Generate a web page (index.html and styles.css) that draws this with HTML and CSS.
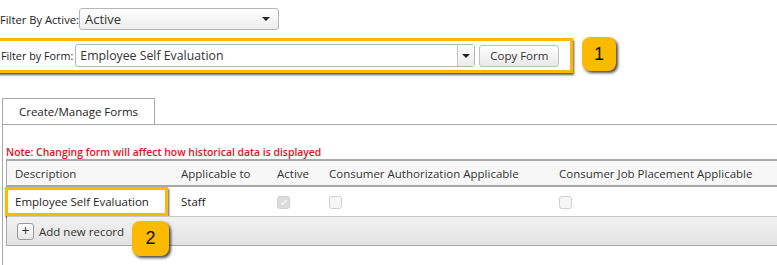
FILE: index.html
```html
<!DOCTYPE html>
<html lang="en">
<head>
    <meta charset="UTF-8">
    <title>Forms</title>
    <link rel="stylesheet" href="styles.css">
</head>
<body>
    <div class="filter-row">
        <label class="lbl">Filter By Active:</label>
        <div class="dropdown active-drop">
            <span class="drop-text">Active</span>
            <span class="caret"></span>
        </div>
    </div>

    <div class="form-row">
        <div class="highlight form-box">
            <label class="lbl">Filter by Form:</label>
            <div class="dropdown form-drop">
                <span class="drop-text">Employee Self Evaluation</span>
                <span class="drop-btn"><span class="caret"></span></span>
            </div>
            <button class="btn">Copy Form</button>
        </div>
        <div class="badge">1</div>
    </div>

    <div class="tabs">
        <div class="tab">Create/Manage Forms</div>
    </div>

    <div class="panel">
        <div class="note">Note: Changing form will affect how historical data is displayed</div>

        <div class="grid">
            <div class="grid-head">
                <div class="col c-desc">Description</div>
                <div class="col c-app">Applicable to</div>
                <div class="col c-act">Active</div>
                <div class="col c-auth">Consumer Authorization Applicable</div>
                <div class="col c-job">Consumer Job Placement Applicable</div>
            </div>
            <div class="grid-row">
                <div class="col c-desc"><span class="highlight cell-box">Employee Self Evaluation</span></div>
                <div class="col c-app">Staff</div>
                <div class="col c-act"><span class="chk checked">&#10004;</span></div>
                <div class="col c-auth"><span class="chk"></span></div>
                <div class="col c-job"><span class="chk"></span></div>
            </div>
            <div class="grid-foot">
                <span class="plus">+</span> Add new record
                <div class="badge badge-two">2</div>
            </div>
        </div>
    </div>
</body>
</html>
```

FILE: styles.css
```css
/* annotation yellow */
:root {
    --note-yellow: #fbb900;
    --line: #a8a8a8;
}

body {
    margin: 0;
    font-family: "Open Sans", Arial, sans-serif;
    font-size: 10.8px;
    color: #222;
    background: #fff;
}

.lbl {
    white-space: nowrap;
}

/* top filters */
.filter-row {
    display: flex;
    align-items: center;
    height: 22px;
    margin-top: 8px;
}

.filter-row .lbl {
    font-size: 11.2px;
}

.dropdown {
    display: flex;
    align-items: center;
    height: 20px;
    border: 1px solid #b5b5b5;
    border-radius: 3px;
    box-sizing: border-box;
    background: linear-gradient(#ffffff, #ededed);
}

.active-drop {
    width: 200px;
    height: 22px;
    margin-left: 0;
    padding: 0 8px 0 5px;
}

.drop-text {
    flex: 1;
    font-size: 13px;
    color: #333;
}

.caret {
    width: 0;
    height: 0;
    border-left: 4px solid transparent;
    border-right: 4px solid transparent;
    border-top: 4px solid #222;
}

.form-row {
    display: flex;
    align-items: center;
    margin-top: 8px;
}

.highlight {
    border: 3px solid var(--note-yellow);
    box-shadow: 1px 2px 2px rgba(0, 0, 0, 0.65);
}

/* left edge of the box runs off the page */
.form-box {
    display: flex;
    align-items: center;
    width: 576px;
    height: 35px;
    margin-left: -3px;
    box-sizing: border-box;
    padding-left: 1px;
}

.form-drop {
    width: 400px;
    height: 23px;
    margin-left: 2px;
    padding-left: 4px;
    background: #fff;
}

.form-drop .drop-text {
    font-size: 12.3px;
}

.drop-btn {
    display: flex;
    align-items: center;
    justify-content: center;
    width: 16px;
    height: 100%;
    border-left: 1px solid #c5c5c5;
    background: linear-gradient(#fdfdfd, #ececec);
}

.btn {
    margin-left: 4px;
    width: 80px;
    height: 22px;
    border: 1px solid #c0c0c0;
    border-radius: 3px;
    background: linear-gradient(#ffffff, #e8e8e8);
    font-family: inherit;
    font-size: 11.5px;
    color: #333;
    padding: 0;
}

.badge {
    display: flex;
    align-items: center;
    justify-content: center;
    width: 34px;
    height: 34px;
    margin-left: 9px;
    margin-top: -3px;
    border-radius: 8px;
    background: var(--note-yellow);
    box-shadow: 2px 2px 3px rgba(0, 0, 0, 0.7);
    font-family: Arial, sans-serif;
    font-size: 18px;
    color: #111;
}

/* tab strip */
.tabs {
    display: flex;
    margin-top: 25px;
    padding-left: 2px;
}

.tab {
    width: 153px;
    height: 26px;
    line-height: 25px;
    text-align: center;
    border: 1px solid var(--line);
    border-bottom: none;
    box-sizing: border-box;
    font-size: 11.5px;
    color: #222;
}

.panel {
    margin-left: 2px;
    border-top: 1px solid var(--line);
    border-left: 1px solid var(--line);
    padding: 21px 0 20px 3px;
}

.note {
    color: #e0101a;
    font-weight: 600;
    font-size: 10.4px;
    line-height: 13px;
}

.grid {
    position: relative;
    border-top: 2px solid var(--line);
    border-left: 1px solid var(--line);
}

.grid-head, .grid-row {
    display: flex;
    align-items: center;
}

.grid-head {
    height: 24px;
    background: #f7f7f7;
    border-bottom: 2px solid var(--line);
    font-size: 11.5px;
    color: #333;
}

.grid-row {
    height: 29px;
    font-size: 11.5px;
}

.col {
    box-sizing: border-box;
    white-space: nowrap;
}

.c-desc { width: 174px; padding-left: 8px; }
.c-app { width: 96px; }
.c-act { width: 52px; }
.c-auth { width: 230px; }
.c-job { flex: 1; }

.grid-row .c-desc {
    padding-left: 0;
}

.cell-box {
    display: inline-block;
    margin-left: -2px;
    width: 163px;
    height: 29px;
    line-height: 23px;
    box-sizing: border-box;
    padding-left: 7px;
}

.chk {
    display: inline-block;
    width: 13px;
    height: 13px;
    border: 1px solid #cfcfcf;
    border-radius: 3px;
    background: #f6f6f6;
    box-sizing: border-box;
    vertical-align: middle;
    font-size: 10px;
    line-height: 11px;
    text-align: center;
    color: #bdbdbd;
}

.chk.checked {
    background: #dcdcdc;
    color: #f5f5f5;
}

.grid-foot {
    position: relative;
    display: flex;
    align-items: center;
    height: 28px;
    padding-left: 10px;
    background: linear-gradient(#f1f1f1, #e3e3e3);
    border-top: 1px solid #c8c8c8;
    border-bottom: 1px solid var(--line);
    font-size: 11.5px;
    color: #333;
}

.plus {
    display: inline-flex;
    align-items: center;
    justify-content: center;
    width: 15px;
    height: 15px;
    margin-right: 5px;
    border: 1px solid #9a9a9a;
    border-radius: 3px;
    background: linear-gradient(#ffffff, #e6e6e6);
    font-size: 14px;
    line-height: 1;
}

/* callout over the footer */
.badge-two {
    position: absolute;
    left: 125px;
    top: 4px;
    width: 37px;
    height: 35px;
    margin: 0;
}
```
